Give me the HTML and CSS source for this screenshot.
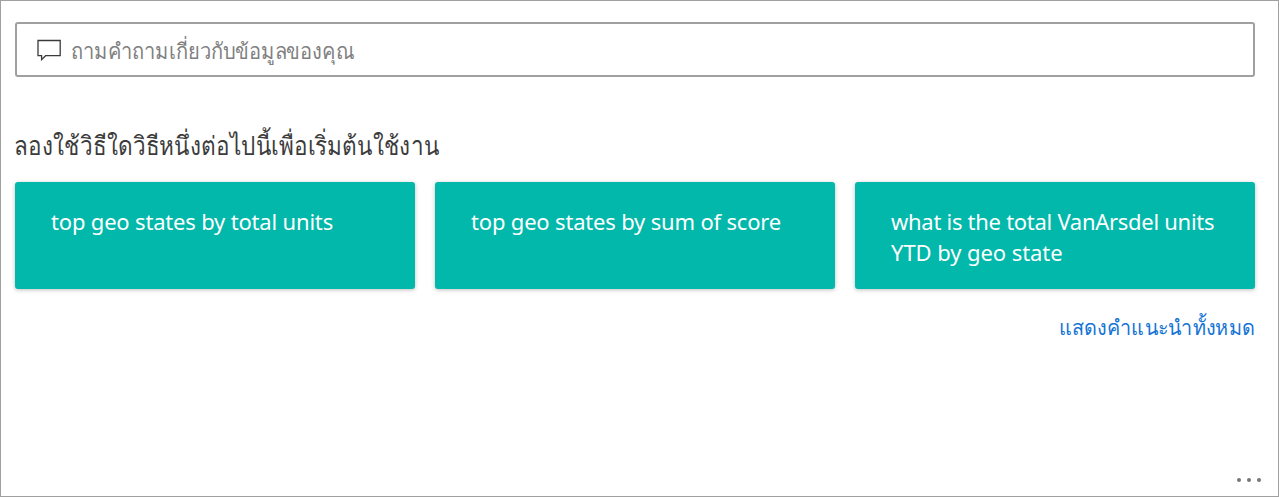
FILE: index.html
```html
<!DOCTYPE html>
<html lang="th">
<head>
<meta charset="utf-8">
<title>Q&amp;A</title>
<link rel="stylesheet" href="styles.css">
</head>
<body>
<main class="qna">
  <div class="ask">
    <svg class="ask-icon" width="24" height="23" viewBox="0 0 24 23" fill="none" stroke="#3a3a3a" stroke-width="1.3"><path d="M1 2.5h22.2v15.2H8.6L4.6 21.6v-3.9H1z"/></svg>
    <span class="ask-text">ถามคำถามเกี่ยวกับข้อมูลของคุณ</span>
  </div>
  <h1 class="heading">ลองใช้วิธีใดวิธีหนึ่งต่อไปนี้เพื่อเริ่มต้นใช้งาน</h1>
  <div class="cards">
    <div class="card"><span class="line">top geo states by total units</span></div>
    <div class="card"><span class="line">top geo states by sum of score</span></div>
    <div class="card"><span class="line line-tight">what is the total VanArsdel units</span><span class="line line-loose">YTD by geo state</span></div>
  </div>
  <a class="all">แสดงคำแนะนำทั้งหมด</a>
  <div class="more"><i class="dot"></i><i class="dot"></i><i class="dot"></i></div>
</main>
</body>
</html>
```
FILE: styles.css
```css
* { box-sizing: border-box; }
body { margin: 0; background: #fff; }
.qna {
  width: 1279px; height: 497px; border: 1px solid #a0a0a0;
  padding: 21px 23px 0 14px; display: flex; flex-direction: column;
  font-family: "Noto Sans", "Open Sans", sans-serif; color: #333;
}
.ask {
  height: 55px; border: 2px solid #a0a0a0; border-radius: 3px;
  display: flex; align-items: center; padding-left: 20px; gap: 10px; flex: none;
}
.ask-icon { flex: none; }
.ask-text {
  font-size: 22px; font-weight: 300; color: #808080; white-space: nowrap;
  line-height: 30px; padding-top: 1px;
  transform: scaleX(.913); transform-origin: left;
}
.heading {
  margin: 48px 0 0 -1px; height: 40px; line-height: 40px; font-size: 26px; font-weight: 300;
  white-space: nowrap; align-self: flex-start; color: #3c3c3c;
  transform: scaleX(.866); transform-origin: left;
}
.cards { display: flex; gap: 20px; margin-top: 17px; flex: none; }
.card {
  width: 400px; height: 107px; padding: 24px 36px; border-radius: 3px;
  background: #01b8aa; color: #fff; box-shadow: 0 1px 4px rgba(0,0,0,.25);
  font-size: 22px; line-height: 31px; display: flex; flex-direction: column; align-items: flex-start;
}
.line { white-space: nowrap; letter-spacing: -.18px; }
.line-tight { letter-spacing: -.28px; }
.line-loose { letter-spacing: -.07px; }
.all {
  align-self: flex-end; margin-top: 20px; line-height: 36px; font-size: 21px; font-weight: 300;
  color: #1474d4; white-space: nowrap;
  transform: scaleX(.944); transform-origin: right;
}
.more { display: flex; gap: 6px; margin: auto -6px 14px auto; }
.dot { width: 4px; height: 4px; border-radius: 50%; background: #777; }
```
